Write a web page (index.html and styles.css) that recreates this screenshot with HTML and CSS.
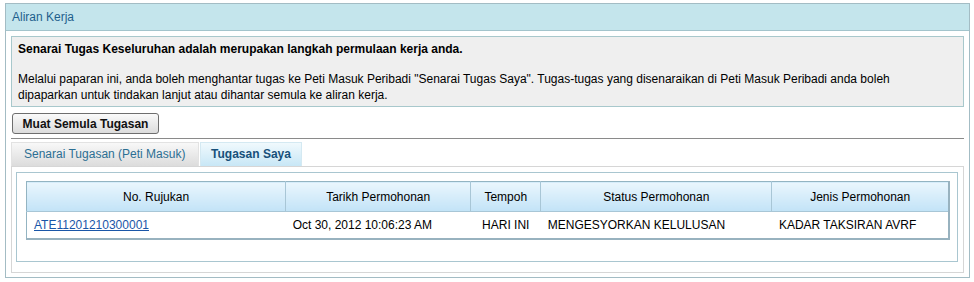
FILE: index.html
```html
<!DOCTYPE html>
<html>
<head>
<meta charset="utf-8">
<link rel="stylesheet" href="styles.css">
</head>
<body>
<div class="panel">
  <div class="panel-head">Aliran Kerja</div>
  <div class="panel-body">
    <div class="info">
      <p class="info-title">Senarai Tugas Keseluruhan adalah merupakan langkah permulaan kerja anda.</p>
      <p class="info-text">Melalui paparan ini, anda boleh menghantar tugas ke Peti Masuk Peribadi "Senarai Tugas Saya". Tugas-tugas yang disenaraikan di Peti Masuk Peribadi anda boleh dipaparkan untuk tindakan lanjut atau dihantar semula ke aliran kerja.</p>
    </div>
    <div class="actions">
      <button class="btn">Muat Semula Tugasan</button>
    </div>
    <div class="tabs">
      <div class="tab">Senarai Tugasan (Peti Masuk)</div>
      <div class="tab tab-active">Tugasan Saya</div>
    </div>
    <div class="tab-panel">
      <div class="grid-wrap">
        <table class="grid">
          <thead>
            <tr>
              <th class="c1">No. Rujukan</th>
              <th class="c2">Tarikh Permohonan</th>
              <th class="c3">Tempoh</th>
              <th class="c4">Status Permohonan</th>
              <th class="c5">Jenis Permohonan</th>
            </tr>
          </thead>
          <tbody>
            <tr>
              <td><a href="#">ATE11201210300001</a></td>
              <td>Oct 30, 2012 10:06:23 AM</td>
              <td class="center">HARI INI</td>
              <td>MENGESYORKAN KELULUSAN</td>
              <td>KADAR TAKSIRAN AVRF</td>
            </tr>
          </tbody>
        </table>
      </div>
    </div>
  </div>
</div>
</body>
</html>
```

FILE: styles.css
```css
* { box-sizing: border-box; }
body {
  margin: 0;
  background: #ffffff;
  font-family: "Liberation Sans", Arial, sans-serif;
  font-size: 12px;
  color: #000;
}
.panel {
  margin: 3px 0 0 5px;
  width: 965px;
  border: 1px solid #a3bcc4;
  background: #fff;
}
.panel-head {
  height: 27px;
  line-height: 26px;
  padding-left: 6px;
  background: #c4e5ec;
  border-bottom: 1px solid #a3c4cc;
  color: #1f5f8c;
  font-size: 12px;
}
.panel-body {
  padding: 5px 5px 4px 5px;
}
.info {
  border: 1px solid #a8c8cc;
  background: #efefef;
  padding: 4px 50px 3px 6px;
  line-height: 16px;
}
.info p { margin: 0; }
.info-title { font-weight: bold; margin-bottom: 14px !important; }
.actions {
  padding: 6px 0 4px 1px;
  border-bottom: 1px solid #8a8a8a;
}
.btn {
  font-family: "Liberation Sans", Arial, sans-serif;
  font-size: 12px;
  font-weight: bold;
  height: 21px;
  width: 147px;
  padding: 0;
  border: 1px solid #6e6e6e;
  border-radius: 3px;
  background: linear-gradient(#fafafa, #dcdcdc);
  color: #111;
}
.tabs {
  display: flex;
  margin-top: 3px;
  height: 24px;
  gap: 1px;
}
.tab {
  padding: 0 0 0 12px;
  line-height: 23px;
  background: linear-gradient(#f8f8f8, #dcdcdc);
  border: 1px solid #e2e2e2;
  border-bottom: none;
  color: #2c6f93;
  width: 188px;
}
.tab-active {
  width: 102px;
  padding: 0;
  font-weight: bold;
  text-align: center;
  background: linear-gradient(#f0f9fd, #c8e7f6);
  border-color: #d4e9f2;
  color: #17507a;
}
.tab-panel {
  border: 1px solid #d6d6d6;
  padding: 5px 5px 9px 4px;
  height: 107px;
}
.grid-wrap {
  border: 1px solid #a9c6d0;
  padding: 8px 8px 21px 9px;
}
.grid {
  border-collapse: collapse;
  width: 924px;
  border: 1px solid #93b4c2;
  border-bottom: 2px solid #98b2bf;
  border-right: 2px solid #98b2bf;
}
.grid th {
  height: 30px;
  font-weight: normal;
  background: linear-gradient(#eaf6fd, #c2e3f7);
  border-right: 1px solid #a8c6d6;
  border-bottom: 1px solid #a8c6d6;
  text-align: center;
  padding: 0;
}
.grid td {
  height: 27px;
  padding: 0 7px;
  white-space: nowrap;
}
.grid td.center { text-align: center; padding: 0; }
.grid a { color: #1a56a8; text-decoration: underline; }
.c1 { width: 259px; }
.c2 { width: 185px; }
.c3 { width: 70px; }
.c4 { width: 231px; }
.c5 { width: 177px; }
```
